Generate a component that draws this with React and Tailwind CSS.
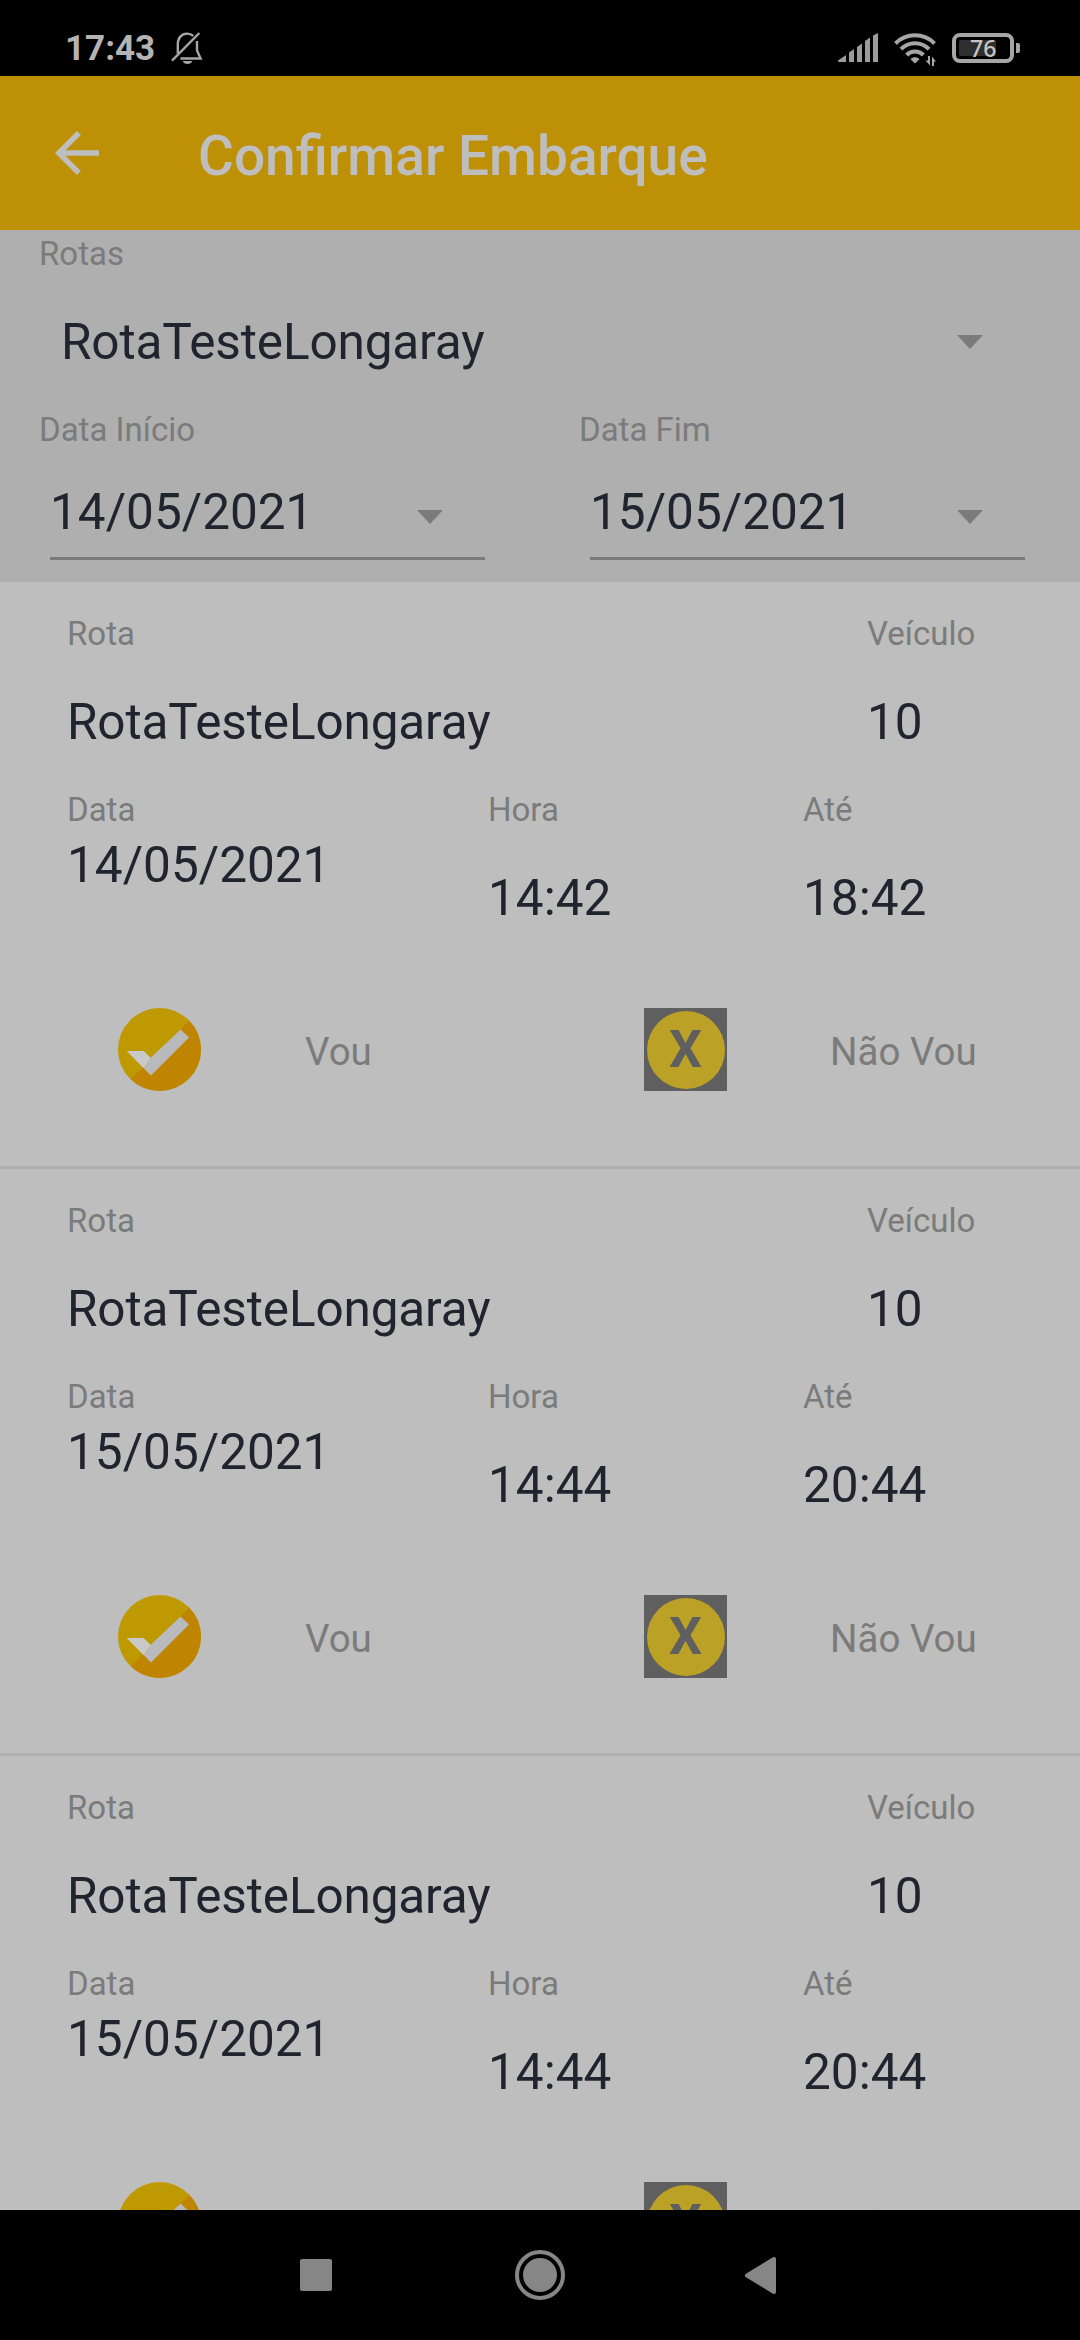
import React from "react";

const viagens = [
  { id: 1, rota: "RotaTesteLongaray", veiculo: "10", data: "14/05/2021", hora: "14:42", ate: "18:42" },
  { id: 2, rota: "RotaTesteLongaray", veiculo: "10", data: "15/05/2021", hora: "14:44", ate: "20:44" },
  { id: 3, rota: "RotaTesteLongaray", veiculo: "10", data: "15/05/2021", hora: "14:44", ate: "20:44" },
];

const StatusBar = () => (
  <div className="h-[76px] bg-black flex items-start justify-between pl-[65px] pr-[60px] pt-[32px] shrink-0">
    <div className="flex items-start">
      <span className="text-[35px] leading-[33px] font-bold text-[#b4b4b4] w-[106px]">17:43</span>
      <svg className="w-8 h-8" viewBox="0 0 32 32" fill="none" stroke="#a6a6a6" strokeWidth="2.4">
        <path d="M6.800 21.500V12.500C6.800 6 10.500 1.600 16 1.600c2.600 0 4.700.8 6.300 2.300" />
        <path d="M26 9v9.500l3.600 8H9.500" />
        <path d="M1 28.600 28.300 1" />
        <path d="M11.500 29h10c-1 2-2.700 3-5 3s-4-1-5-3z" fill="#a6a6a6" stroke="none" />
      </svg>
    </div>
    <div className="flex items-start pt-px">
      <svg className="w-10 h-[29px] mr-4" viewBox="0 0 40 29" fill="#9c9c9c">
        <path d="M0 27.500 8 22v7H1.500C.5 29 0 28.500 0 27.500z" />
        <path d="M11 19.500 16 16v13h-5z" />
        <path d="M19 14 24 10.500V29h-5z" />
        <path d="M27 8 32 4.500V29h-5z" />
        <path d="M35 2.500 40 0v29h-5z" />
      </svg>
      <svg className="w-[42px] h-[33px] mr-4" viewBox="0 0 42 33" fill="none" stroke="#a6a6a6" strokeWidth="4">
        <path d="M1.500 10.500C12-.4 30-.4 40.500 10.500" />
        <path d="M7 16.200c7.600-8 20.400-8 28 0" />
        <path d="M12.600 22c4.600-4.800 12.200-4.800 16.800 0" />
        <path d="M16.500 26.200c2.500-2.600 6.500-2.600 9 0L21 30.500z" fill="#a6a6a6" stroke="none" />
        <path d="M36 23v9.500l-4.500-5H34V23zM38 33v-9.500l4 5h-2V33z" fill="#a6a6a6" stroke="none" />
      </svg>
      <div className="w-[62px] h-[30px] rounded-[8px] border-4 border-[#a6a6a6] p-[3px] relative">
        <div className="w-[37px] h-4 bg-[#2e2e2e] rounded-[2px]" />
        <span className="absolute left-[14px] top-0 text-[23px] leading-[22px] font-medium text-[#c4c4c4] font-['Noto_Sans',sans-serif]">
          76
        </span>
      </div>
      <div className="w-1 h-[10px] mt-[10px] ml-[2px] bg-[#a6a6a6] rounded-r-[2px]" />
    </div>
  </div>
);

const Header = () => (
  <div className="h-[154px] bg-[#be9005] flex items-center pl-[44px] shrink-0">
    <svg className="w-[66px] h-[66px]" viewBox="0 0 24 24" fill="#bebebe">
      <path d="M20 11H7.830l5.590-5.590L12 4l-8 8 8 8 1.410-1.410L7.830 13H20v-2z" />
    </svg>
    <h1 className="ml-[88px] mt-[5px] text-[55px] leading-[64px] font-medium text-[#bebebe]">Confirmar Embarque</h1>
  </div>
);

const Label = ({ children }) => (
  <div className="text-[33px] leading-[40px] text-[#7b7b7b]">{children}</div>
);

const Valor = ({ children }) => (
  <div className="text-[49.5px] leading-[60px] text-[#20242f]">{children}</div>
);

const Seta = () => (
  <svg className="w-[26px] h-[14px]" viewBox="0 0 26 14" fill="#7b7b7b">
    <path d="M0 0h26L13 14z" />
  </svg>
);

const CampoData = ({ label, valor }) => (
  <div className="w-[540px] pl-[39px]">
    <Label>{label}</Label>
    <div className="mt-[32px] ml-[11px] w-[435px] h-[78px] border-b-[3px] border-[#7b7b7b] flex items-start justify-between pr-[42px]">
      <Valor>{valor}</Valor>
      <div className="pt-[28px]">
        <Seta />
      </div>
    </div>
  </div>
);

const Filtros = () => (
  <div className="h-[352px] bg-[#afafaf] pt-1 shrink-0">
    <div className="pl-[39px] pr-[97px]">
      <Label>Rotas</Label>
      <div className="mt-[38px] pl-[22px] flex items-center justify-between tracking-[-0.15px]">
        <Valor>RotaTesteLongaray</Valor>
        <Seta />
      </div>
    </div>
    <div className="flex mt-[38px]">
      <CampoData label="Data Início" valor="14/05/2021" />
      <CampoData label="Data Fim" valor="15/05/2021" />
    </div>
  </div>
);

const IconeVou = () => (
  <svg className="w-[83px] h-[83px]" viewBox="0 0 83 83">
    <clipPath id="circulo">
      <circle cx="41.500" cy="41.500" r="41.500" />
    </clipPath>
    <g clipPath="url(#circulo)">
      <path d="M0 0h83v83H0z" fill="#be9a00" />
      <path d="M83 1v82H1z" fill="#bf8500" />
    </g>
    <path d="M9 43h16.500l7 7L26 60.500z" fill="#c9c9c9" />
    <path d="M26 60.500 32.500 50 62.500 21.500 71 29.500 33 67.500z" fill="#b9babd" />
    <path d="M9 43h16.500l7 7-6.500 8-1.500 1z" fill="#c9c9c9" />
  </svg>
);

const IconeNaoVou = () => (
  <div className="w-[83px] h-[83px] bg-[#5f5f5f] flex items-center justify-center">
    <div className="w-[78px] h-[78px] rounded-full bg-[#bba227] flex items-center justify-center">
      <span className="text-[52px] leading-[52px] font-bold text-[#5f5f5f]">X</span>
    </div>
  </div>
);

const Viagem = ({ viagem }) => (
  <div className="h-[587px] border-b-[3px] border-[#afafaf] pt-[32px] pl-[67px] shrink-0">
    <div className="flex">
      <div className="w-[800px]">
        <Label>Rota</Label>
        <div className="mt-[38px] tracking-[-0.15px]">
          <Valor>{viagem.rota}</Valor>
        </div>
      </div>
      <div>
        <Label>Veículo</Label>
        <div className="mt-[38px]">
          <Valor>{viagem.veiculo}</Valor>
        </div>
      </div>
    </div>
    <div className="flex mt-[38px]">
      <div className="w-[421px]">
        <Label>Data</Label>
        <div className="mt-[5px]">
          <Valor>{viagem.data}</Valor>
        </div>
      </div>
      <div className="w-[315px]">
        <Label>Hora</Label>
        <div className="mt-[38px]">
          <Valor>{viagem.hora}</Valor>
        </div>
      </div>
      <div>
        <Label>Até</Label>
        <div className="mt-[38px]">
          <Valor>{viagem.ate}</Valor>
        </div>
      </div>
    </div>
    <div className="flex items-center mt-[80px] pl-[51px] text-[38.5px] leading-[48px] text-[#7b7b7b]">
      <IconeVou />
      <span className="ml-[104px] pt-1 w-[339px]">Vou</span>
      <IconeNaoVou />
      <span className="ml-[103px] pt-1">Não Vou</span>
    </div>
  </div>
);

const NavBar = () => (
  <div className="h-[130px] bg-black flex items-center pl-[300px] shrink-0">
    <div className="w-8 h-8 rounded-[2px] bg-[#868686]" />
    <div className="ml-[183px] w-[50px] h-[50px] rounded-full border-4 border-[#868686] p-1">
      <div className="w-full h-full rounded-full bg-[#868686]" />
    </div>
    <svg className="ml-[180px] w-[31px] h-[37px]" viewBox="0 0 31 37">
      <path d="M2 18.500 29 2v33z" fill="#868686" stroke="#868686" strokeWidth="4" strokeLinejoin="round" />
    </svg>
  </div>
);

const App = () => {
  return (
    <div className="w-[1080px] h-[2340px] flex flex-col overflow-hidden bg-black font-['Roboto',sans-serif]">
      <StatusBar />
      <Header />
      <Filtros />
      <div className="flex-1 min-h-0 overflow-hidden flex flex-col bg-[#bebebe]">
        {viagens.map((v) => (
          <Viagem key={v.id} viagem={v} />
        ))}
      </div>
      <NavBar />
    </div>
  );
};

export default App;
